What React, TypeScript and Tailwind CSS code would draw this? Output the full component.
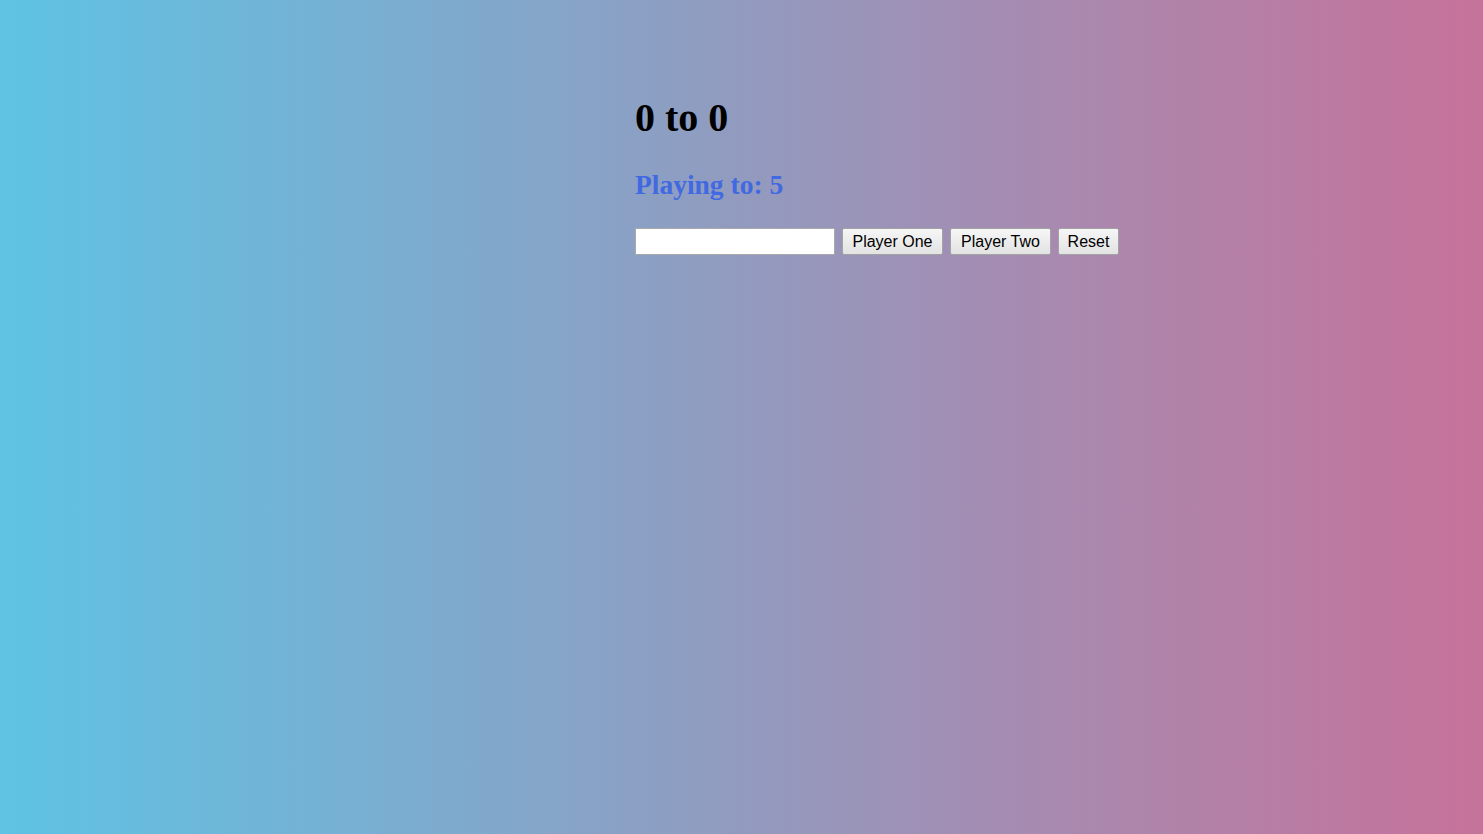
import { useState } from "react";

export default function App() {
  const [p1, setP1] = useState(0);
  const [p2, setP2] = useState(0);
  const [target, setTarget] = useState(5);
  const [input, setInput] = useState("");

  const over = p1 >= target || p2 >= target;

  const reset = () => {
    setP1(0);
    setP2(0);
  };

  const btn =
    "h-[27px] border border-[#a3a3a3] rounded-[2px] bg-gradient-to-b from-[#f6f6f6] to-[#e3e3e3] text-[16px] leading-none text-black font-['Liberation_Sans',Arial,sans-serif]";

  return (
    <div className="min-h-screen w-full bg-[linear-gradient(to_right,#5ec3e4,#c6729a)]">
      <div className="flex flex-col pl-[635px] pt-[95px]">
        <h1 className="h-[46px] text-[40px] leading-[46px] font-bold text-black font-['Liberation_Serif','Times_New_Roman',serif]">
          {p1} to {p2}
        </h1>
        <h2 className="mt-[28px] h-[31px] text-[27.5px] leading-[31px] font-bold text-[#4169e1] font-['Liberation_Serif','Times_New_Roman',serif]">
          Playing to: {target}
        </h2>
        <div className="mt-[28px] flex items-center gap-[7px]">
          <input
            type="number"
            value={input}
            onChange={(e) => {
              setInput(e.target.value);
              const n = parseInt(e.target.value);
              if (n > 0) {
                setTarget(n);
                reset();
              }
            }}
            className="h-[27px] w-[200px] border border-[#a9a9a9] bg-white px-1 text-[16px] outline-none font-['Liberation_Sans',Arial,sans-serif] [appearance:textfield] [&::-webkit-inner-spin-button]:appearance-none"
          />
          <button className={`${btn} w-[101px]`} disabled={over} onClick={() => setP1(p1 + 1)}>
            Player One
          </button>
          <button className={`${btn} w-[101px]`} disabled={over} onClick={() => setP2(p2 + 1)}>
            Player Two
          </button>
          <button className={`${btn} w-[61px]`} onClick={reset}>
            Reset
          </button>
        </div>
      </div>
    </div>
  );
}
